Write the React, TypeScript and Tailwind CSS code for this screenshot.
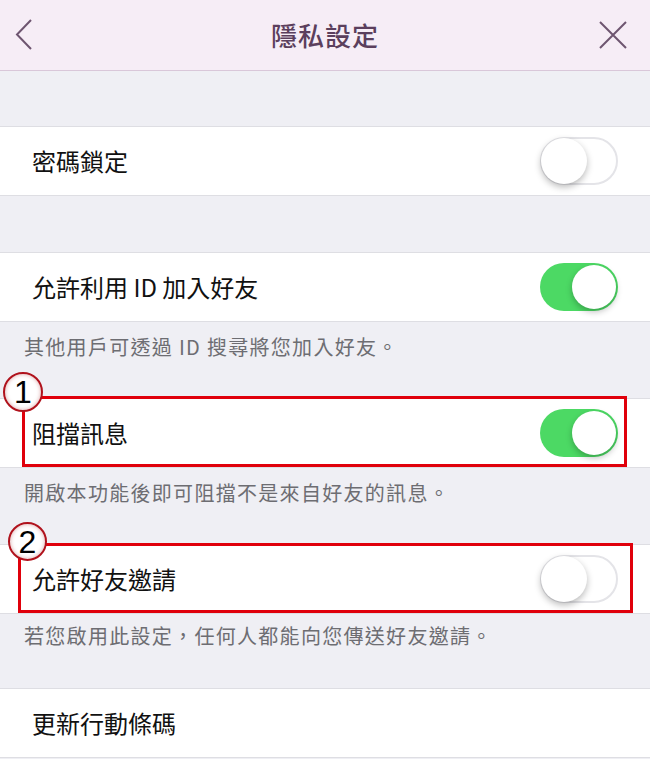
import React from 'react';

const rowText = "text-[24px] leading-[32px] text-[#111]";
const noteText = "text-[20px] leading-[28px] text-[#6d6d72] tracking-[1.3px]";

function Toggle({ on }: { on: boolean }) {
  if (on) {
    return (
      <div className="w-[78px] h-[48px] rounded-full bg-[#4cd964] flex items-center justify-end p-[2px] shrink-0">
        <div className="w-[44px] h-[44px] rounded-full bg-white shadow-[0_3px_6px_rgba(0,0,0,0.25)]" />
      </div>
    );
  }
  return (
    <div className="w-[78px] h-[48px] rounded-full bg-white border-2 border-[#e4e4e8] flex items-center justify-start shrink-0">
      <div className="w-[46px] h-[46px] -ml-[1px] rounded-full bg-white shadow-[0_3px_7px_rgba(0,0,0,0.28)]" />
    </div>
  );
}

function Row({ label, toggle }: { label: string; toggle?: boolean }) {
  return (
    <div className="h-[70px] bg-white border-y border-[#dedee3] flex items-center justify-between px-[32px]">
      <span className={rowText}>{label}</span>
      {toggle !== undefined && <Toggle on={toggle} />}
    </div>
  );
}

function Note({ text, h, pt }: { text: string; h: string; pt: string }) {
  return (
    <div className={h + " " + pt + " pl-[24px]"}>
      <span className={noteText}>{text}</span>
    </div>
  );
}

function Marker({ n, className }: { n: string; className: string }) {
  return (
    <div className={"absolute rounded-full bg-white border-2 border-[#b0121c] flex items-center justify-center shadow-[inset_0_0_4px_rgba(150,0,0,0.35)] " + className}>
      <span className="font-['Liberation_Sans',sans-serif] text-[32px] leading-none text-black">{n}</span>
    </div>
  );
}

export default function App() {
  return (
    <div className="w-[650px] h-[759px] bg-[#efeff4] relative overflow-hidden font-['Noto_Sans_CJK_TC','Noto_Sans_CJK_SC',sans-serif]">
      <header className="h-[71px] bg-[#f6edf6] border-b border-[#d9c7d9] grid grid-cols-[1fr_auto_1fr] items-center px-[15px]">
        <svg width="20" height="34" viewBox="0 0 20 34">
          <path d="M16 2 L2 16.5 L16 31" fill="none" stroke="#6e5570" strokeWidth="2" />
        </svg>
        <span className="text-[26px] leading-[34px] font-medium text-[#5b3f5d] tracking-[1px]">隱私設定</span>
        <svg width="30" height="30" viewBox="0 0 30 30" className="justify-self-end mr-[7px]">
          <path d="M2 2 L28 28 M28 2 L2 28" fill="none" stroke="#6e5570" strokeWidth="2" />
        </svg>
      </header>

      <div className="h-[55px]" />
      <Row label="密碼鎖定" toggle={false} />
      <div className="h-[56px]" />
      <Row label="允許利用 ID 加入好友" toggle={true} />
      <Note text="其他用戶可透過 ID 搜尋將您加入好友。" h="h-[76px]" pt="pt-[11px]" />
      <Row label="阻擋訊息" toggle={true} />
      <Note text="開啟本功能後即可阻擋不是來自好友的訊息。" h="h-[76px]" pt="pt-[11px]" />
      <Row label="允許好友邀請" toggle={false} />
      <Note text="若您啟用此設定，任何人都能向您傳送好友邀請。" h="h-[74px]" pt="pt-[8px]" />
      <Row label="更新行動條碼" />

      {/* annotations drawn over the list */}
      <div className="absolute left-[22px] top-[396px] w-[605px] h-[71px] border-[3px] border-[#e0000b]" />
      <div className="absolute left-[18px] top-[543px] w-[615px] h-[70px] border-[3px] border-[#e0000b]" />
      <Marker n="1" className="left-[3px] top-[372px] w-[40px] h-[40px]" />
      <Marker n="2" className="left-[8px] top-[522px] w-[39px] h-[39px]" />
    </div>
  );
}
